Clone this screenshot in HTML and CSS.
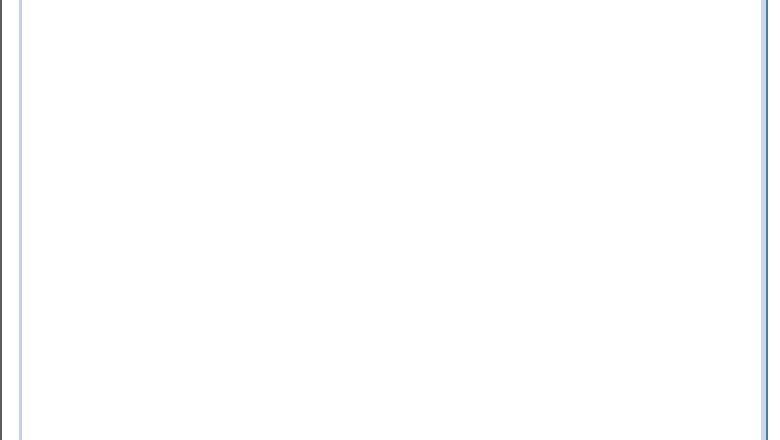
FILE: index.html
```html
<!DOCTYPE html>
<html lang="en">

<head>
    <meta charset="UTF-8">
    <meta name="viewport" content="width=device-width, initial-scale=1.0">
    <link rel="stylesheet" href="styles.css">
    <title>Blank window</title>
</head>

<body>
    <div class="edge"></div>
    <div class="frame">
        <div class="pane"></div>
    </div>
</body>

</html>
```
FILE: styles.css
```css
/* Reset and global styles */
html,
body {
    height: 100%;
}

body {
    font-family: "Liberation Sans", Arial, sans-serif;
    margin: 0;
    padding: 0;
    background-color: #fff;
    display: flex;
    overflow: hidden;
}

/* Dark line on the far left */
.edge {
    width: 2px;
    background-color: #5c5c5c;
    margin-right: 17px;
}

/* Window frame */
.frame {
    width: 744px;
    border-left: 3px solid #c4d1e9;
    border-right: 2px solid #4a7b98;
    display: flex;
}

.pane {
    flex: 1;
    background-color: #fff;
    border-right: 5px solid #c6d9ef;
}
```
